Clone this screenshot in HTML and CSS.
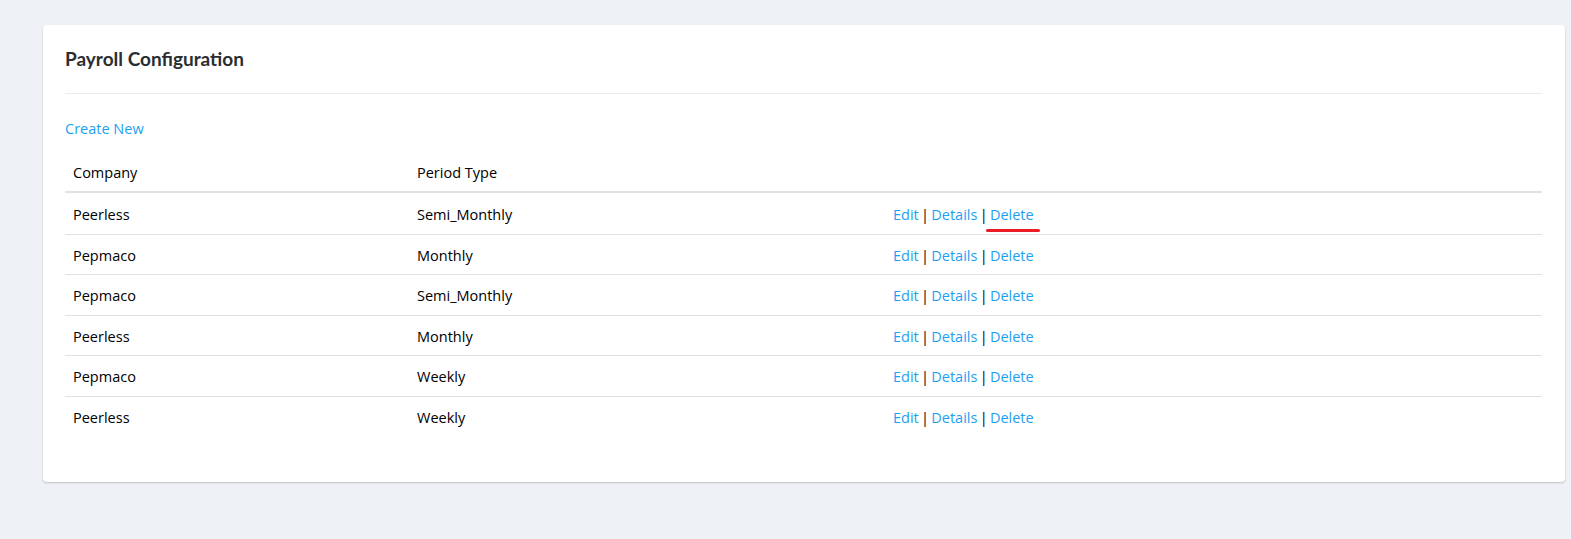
FILE: index.html
```html
<!DOCTYPE html>
<html>
<head>
<meta charset="utf-8">
<link rel="stylesheet" href="styles.css">
</head>
<body>
<div class="page">
  <div class="card">
    <h4 class="card-title">Payroll Configuration</h4>
    <hr class="divider">
    <p class="create"><a href="#">Create New</a></p>
    <table class="table">
      <thead>
        <tr><th class="c1">Company</th><th class="c2">Period Type</th><th></th></tr>
      </thead>
      <tbody>
        <tr><td>Peerless</td><td>Semi_Monthly</td><td class="actions"><a href="#">Edit</a> | <a href="#">Details</a> | <span class="mark"><a href="#">Delete</a><span class="underline"></span></span></td></tr>
        <tr><td>Pepmaco</td><td>Monthly</td><td class="actions"><a href="#">Edit</a> | <a href="#">Details</a> | <a href="#">Delete</a></td></tr>
        <tr><td>Pepmaco</td><td>Semi_Monthly</td><td class="actions"><a href="#">Edit</a> | <a href="#">Details</a> | <a href="#">Delete</a></td></tr>
        <tr><td>Peerless</td><td>Monthly</td><td class="actions"><a href="#">Edit</a> | <a href="#">Details</a> | <a href="#">Delete</a></td></tr>
        <tr><td>Pepmaco</td><td>Weekly</td><td class="actions"><a href="#">Edit</a> | <a href="#">Details</a> | <a href="#">Delete</a></td></tr>
        <tr><td>Peerless</td><td>Weekly</td><td class="actions"><a href="#">Edit</a> | <a href="#">Details</a> | <a href="#">Delete</a></td></tr>
      </tbody>
    </table>
  </div>
</div>
</body>
</html>
```
FILE: styles.css
```css
html, body {
  margin: 0;
  padding: 0;
  background: #eef1f5;
}
body {
  font-family: "Open Sans", "Noto Sans", sans-serif;
  font-size: 14.5px;
  color: #000;
}
.page {
  padding: 25px 6px 58px 43px;
}
.card {
  background: #fff;
  border-radius: 4px;
  box-shadow: 0 1px 2px rgba(0,0,0,0.2);
  padding: 22px 23px 46px 22px;
}
.card-title {
  font-family: Lato, sans-serif;
  font-weight: 700;
  font-size: 19px;
  color: #2a2e30;
  margin: 0;
  line-height: 24px;
}
.divider {
  border: 0;
  border-top: 1px solid #e9ebec;
  margin: 22px 0 0 0;
}
.create {
  margin: 24px 0 10px 0;
  line-height: 21px;
}
a {
  color: #1e9ff2;
  text-decoration: none;
}
.table {
  width: 100%;
  border-collapse: collapse;
  table-layout: fixed;
}
.table th {
  font-weight: 400;
  text-align: left;
  padding: 13px 8px 8px;
  line-height: 21px;
  border-bottom: 2px solid #dee2e6;
}
.table th.c1 { width: 328px; }
.table th.c2 { width: 460px; }
.table td {
  padding: 10px 8px 8.5px;
  line-height: 21px;
  border-top: 1px solid #dee2e6;
}
.table td.actions {
  word-spacing: -1.5px;
}
.table tbody tr:first-child td {
  border-top: 0;
  padding-top: 11px;
}
.mark {
  position: relative;
}
.underline {
  position: absolute;
  left: -4px;
  right: -6px;
  top: 24px;
  height: 3px;
  background: #ec1c24;
  border-radius: 2px;
}
```
